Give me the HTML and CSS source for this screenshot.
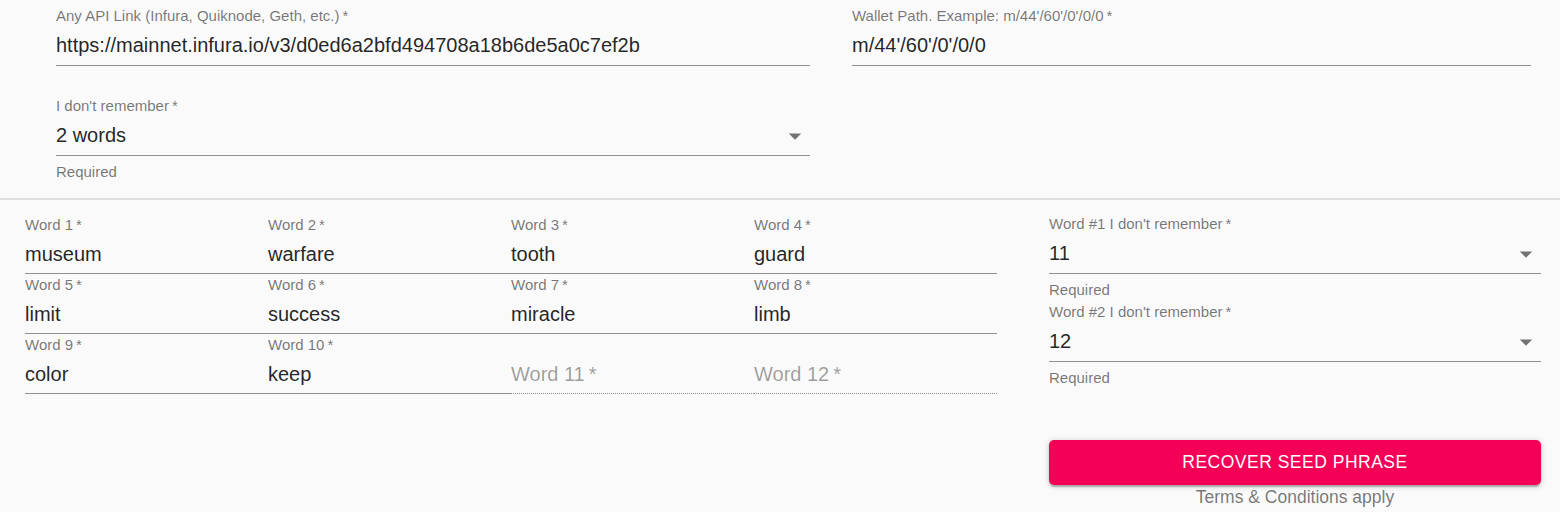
FILE: index.html
```html
<!DOCTYPE html>
<html lang="en">
<head>
<meta charset="utf-8">
<title>Recover seed phrase</title>
<link rel="stylesheet" href="styles.css">
</head>
<body>
<div class="page">
  <section class="top">
    <div class="field">
      <div class="label">Any API Link (Infura, Quiknode, Geth, etc.)&thinsp;*</div>
      <div class="input">https://mainnet.infura.io/v3/d0ed6a2bfd494708a18b6de5a0c7ef2b</div>
    </div>
    <div class="field">
      <div class="label">Wallet Path. Example: m/44'/60'/0'/0/0&thinsp;*</div>
      <div class="input">m/44'/60'/0'/0/0</div>
    </div>
    <div class="field">
      <div class="label">I don't remember&thinsp;*</div>
      <div class="input select">2 words<svg class="arrow" viewBox="0 0 24 24"><path d="M7 10l5 5 5-5z"/></svg></div>
      <div class="helper">Required</div>
    </div>
  </section>
  <div class="divider"></div>
  <section class="bottom">
    <div class="words">
      <div class="field"><div class="label">Word 1&thinsp;*</div><div class="input">museum</div></div>
      <div class="field"><div class="label">Word 2&thinsp;*</div><div class="input">warfare</div></div>
      <div class="field"><div class="label">Word 3&thinsp;*</div><div class="input">tooth</div></div>
      <div class="field"><div class="label">Word 4&thinsp;*</div><div class="input">guard</div></div>
      <div class="field"><div class="label">Word 5&thinsp;*</div><div class="input">limit</div></div>
      <div class="field"><div class="label">Word 6&thinsp;*</div><div class="input">success</div></div>
      <div class="field"><div class="label">Word 7&thinsp;*</div><div class="input">miracle</div></div>
      <div class="field"><div class="label">Word 8&thinsp;*</div><div class="input">limb</div></div>
      <div class="field"><div class="label">Word 9&thinsp;*</div><div class="input">color</div></div>
      <div class="field"><div class="label">Word 10&thinsp;*</div><div class="input">keep</div></div>
      <div class="field disabled"><div class="label"></div><div class="input">Word 11&thinsp;*</div></div>
      <div class="field disabled"><div class="label"></div><div class="input">Word 12&thinsp;*</div></div>
    </div>
    <div class="side">
      <div class="field">
        <div class="label">Word #1 I don't remember&thinsp;*</div>
        <div class="input select">11<svg class="arrow" viewBox="0 0 24 24"><path d="M7 10l5 5 5-5z"/></svg></div>
        <div class="helper">Required</div>
      </div>
      <div class="field">
        <div class="label">Word #2 I don't remember&thinsp;*</div>
        <div class="input select">12<svg class="arrow" viewBox="0 0 24 24"><path d="M7 10l5 5 5-5z"/></svg></div>
        <div class="helper">Required</div>
      </div>
      <button class="recover" type="button">Recover seed phrase</button>
      <div class="terms">Terms &amp; Conditions apply</div>
    </div>
  </section>
</div>
</body>
</html>
```

FILE: styles.css
```css
* { box-sizing: border-box; }

html, body {
  margin: 0;
  padding: 0;
  background: #fafafa;
}

body {
  font-family: "Liberation Sans", Arial, sans-serif;
  color: rgba(0, 0, 0, 0.87);
  width: 1560px;
  height: 512px;
  overflow: hidden;
}

.page {
  display: flex;
  flex-direction: column;
}

.top {
  display: grid;
  grid-template-columns: 754px 679px;
  column-gap: 42px;
  row-gap: 30px;
  align-items: start;
  padding: 6px 0 14px 56px;
}

.divider {
  height: 2px;
  background: #e0e0e0;
}

.field {
  display: flex;
  flex-direction: column;
}

.label {
  height: 20px;
  padding-top: 2px;
  font-size: 15px;
  line-height: 15px;
  color: rgba(0, 0, 0, 0.54);
  white-space: nowrap;
}

.input {
  position: relative;
  height: 40px;
  padding: 7px 0 8px;
  font-size: 20px;
  line-height: 24px;
  color: rgba(0, 0, 0, 0.87);
  border-bottom: 1px solid rgba(0, 0, 0, 0.42);
  white-space: nowrap;
}

.words .label {
  padding-top: 3px;
}

.words .input {
  padding: 8px 0 7px;
}

.select {
  padding-right: 30px;
}

.arrow {
  position: absolute;
  right: 0;
  top: calc(50% - 15px);
  width: 30px;
  height: 30px;
  fill: rgba(0, 0, 0, 0.54);
}

.helper {
  margin-top: 8px;
  padding-bottom: 5px;
  font-size: 15px;
  line-height: 15px;
  color: rgba(0, 0, 0, 0.54);
}

.bottom {
  display: flex;
  gap: 52px;
  padding: 14px 19px 0 25px;
}

.words {
  display: grid;
  grid-template-columns: repeat(4, 243px);
  align-content: start;
}

.disabled .input {
  color: rgba(0, 0, 0, 0.38);
  border-bottom-style: dotted;
}

.side {
  width: 492px;
  display: flex;
  flex-direction: column;
}

.recover {
  margin-top: 50px;
  height: 45px;
  border: 0;
  border-radius: 5px;
  background: #f50057;
  color: #fff;
  font-family: "Liberation Sans", Arial, sans-serif;
  font-size: 17.5px;
  letter-spacing: 0.5px;
  text-transform: uppercase;
  display: flex;
  align-items: center;
  justify-content: center;
  box-shadow: 0 1px 6px 0 rgba(0, 0, 0, 0.2), 0 2px 2px 0 rgba(0, 0, 0, 0.14), 0 4px 1px -2px rgba(0, 0, 0, 0.12);
}

.terms {
  margin-top: 2px;
  text-align: center;
  font-size: 17.5px;
  line-height: 20px;
  color: rgba(0, 0, 0, 0.54);
}
```
